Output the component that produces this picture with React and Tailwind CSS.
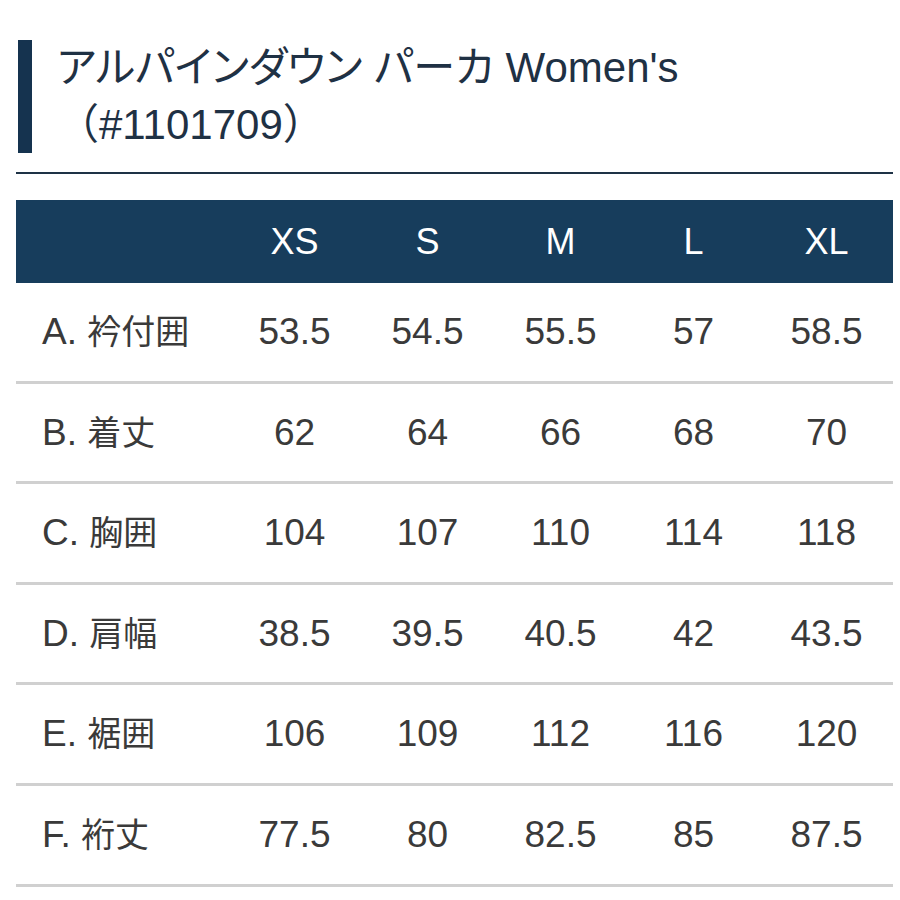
import React from 'react';

const sizes = ['XS', 'S', 'M', 'L', 'XL'];

const rows = [
  { key: 'A.', name: '衿付囲', values: ['53.5', '54.5', '55.5', '57', '58.5'] },
  { key: 'B.', name: '着丈', values: ['62', '64', '66', '68', '70'] },
  { key: 'C.', name: '胸囲', values: ['104', '107', '110', '114', '118'] },
  { key: 'D.', name: '肩幅', values: ['38.5', '39.5', '40.5', '42', '43.5'] },
  { key: 'E.', name: '裾囲', values: ['106', '109', '112', '116', '120'] },
  { key: 'F.', name: '裄丈', values: ['77.5', '80', '82.5', '85', '87.5'] },
];

const font = "font-['Liberation_Sans','Noto_Sans_CJK_JP',sans-serif]";

const App = () => {
  return (
    <div className={`min-h-screen bg-white ${font}`}>
      <div className="pt-[40px] pl-[16px] pr-[7px]">
        {/* Title */}
        <div className="flex">
          <div className="ml-[2px] w-[14px] bg-[#15334f]"></div>
          <h1 className="pl-[25px] text-[42px] leading-[56.5px] font-normal text-[#1f3144]">
            <span className="[font-feature-settings:'palt']">アルパインダウン パーカ</span> Women's
            <br />
            （#1101709）
          </h1>
        </div>

        <div className="mt-[19px] h-[2px] bg-[#1e3246]"></div>

        {/* Size table */}
        <div className="mt-[26px]">
          <div className="grid grid-cols-[212px_repeat(5,1fr)] h-[83px] items-center bg-[#173d5c] text-white text-[36px]">
            <div></div>
            {sizes.map((s) => (
              <div key={s} className="text-center">
                {s}
              </div>
            ))}
          </div>

          {rows.map((row) => (
            <div
              key={row.key}
              className="grid grid-cols-[212px_repeat(5,1fr)] h-[100.6px] items-center border-b-[3px] border-[#d0d0d0] text-[#3a3a3a] text-[37px]"
            >
              <div className="pl-[26px] whitespace-nowrap">
                {row.key} <span className="text-[34px]">{row.name}</span>
              </div>
              {row.values.map((v, i) => (
                <div key={i} className="text-center">
                  {v}
                </div>
              ))}
            </div>
          ))}
        </div>
      </div>
    </div>
  );
};

export default App;
